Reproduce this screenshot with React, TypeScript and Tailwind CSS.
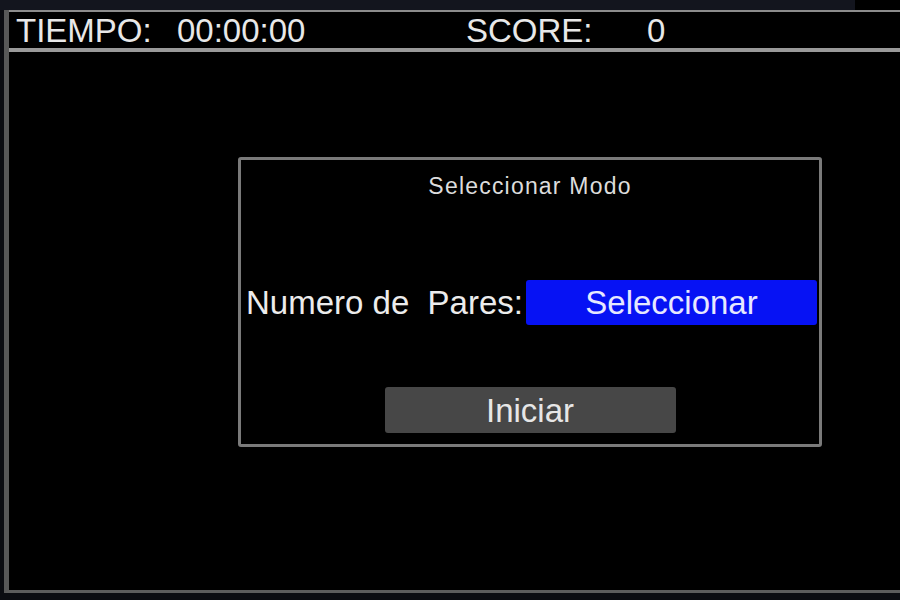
const font = { fontFamily: '"Liberation Sans", Arial, sans-serif' }

function Header() {
  return (
    <div className="flex h-[42px] items-center border-t-2 border-b-4 border-t-[#8c8c8c] border-b-[#9a9a9a] bg-black pl-[7px] pt-[2px] text-[33px] leading-[36px] text-[#e8e8e8]">
      <span className="w-[161px]">TIEMPO:</span>
      <span className="w-[289px]">00:00:00</span>
      <span className="w-[181px]">SCORE:</span>
      <span>0</span>
    </div>
  )
}

function ModeDialog() {
  return (
    <div className="ml-[229px] mt-[105px] flex h-[290px] w-[584px] flex-col items-center rounded-[3px] border-[3px] border-[#7a7a7a] bg-black">
      <div className="mt-[12px] text-[23px] leading-[28px] tracking-[1.2px] text-[#dcdcdc]">
        Seleccionar Modo
      </div>
      <div className="mt-[80px] flex w-full items-center justify-between pl-[5px] pr-[2px]">
        <span className="whitespace-pre text-[33px] leading-[36px] text-[#ececec]">Numero de  Pares:</span>
        <button className="flex h-[45px] w-[291px] items-center justify-center rounded-[3px] bg-[#0612f4] text-[33px] leading-[36px] text-[#e6e8ff]">
          Seleccionar
        </button>
      </div>
      <button className="mt-[62px] flex h-[46px] w-[291px] items-center justify-center rounded-[3px] bg-[#474747] pt-[2px] text-[33px] leading-[36px] text-[#e6e6e6]">
        Iniciar
      </button>
    </div>
  )
}

export default function App() {
  return (
    <div className="flex h-[600px] w-[900px] flex-col overflow-hidden bg-[#0b0c11]" style={font}>
      <div className="flex h-[10px]">
        <div className="w-[855px] bg-[#13151e]" />
        <div className="flex-1 bg-black" />
      </div>
      <div className="ml-[4px] flex h-[583px] flex-col border-b-[3px] border-l-[5px] border-b-[#5c5c5c] border-l-[#585858] bg-black">
        <Header />
        <div className="flex-1">
          <ModeDialog />
        </div>
      </div>
    </div>
  )
}
